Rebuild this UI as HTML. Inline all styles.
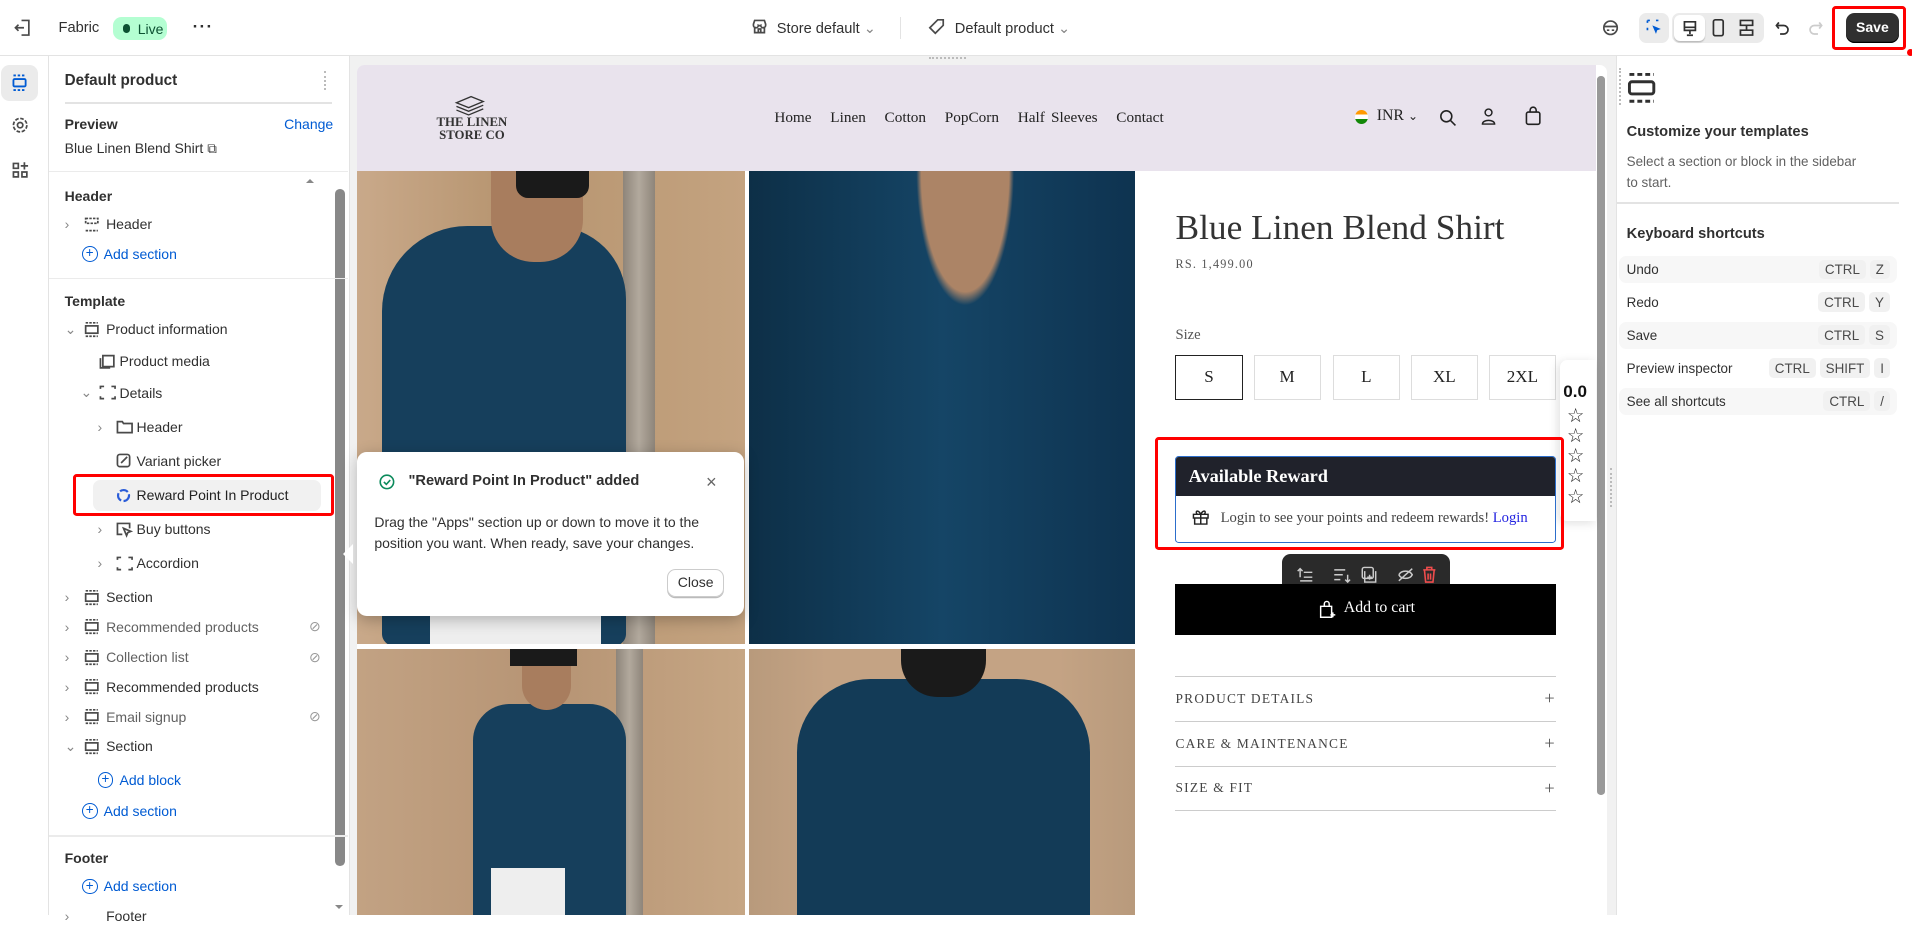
<!DOCTYPE html>
<html><head><meta charset="utf-8"><style>
html{zoom:1.21939}
*{box-sizing:border-box;margin:0;padding:0}
body{width:1568px;height:750px;overflow:hidden;font-family:"Liberation Sans",sans-serif;font-size:12px;color:#303030;background:#fff;position:relative}
.a{position:absolute}
.serif{font-family:"Liberation Serif",serif}
.ico{stroke:#4a4a4a;fill:none;stroke-width:1.4}
.row{position:absolute;left:0;display:flex;align-items:center;height:20px;font-size:11.5px;color:#303030}
.row svg{flex:none}
.blue{color:#005bd3}
.kbd{display:inline-block;background:#f1f1f1;border-radius:4px;padding:2px 5px;margin-left:3px;font-size:11px;color:#4a4a4a}
.sc{position:absolute;left:1328px;width:228px;height:22px;display:flex;align-items:center;justify-content:space-between;padding:0 6px;font-size:11px;border-radius:6px}
.sc.g{background:#f7f7f7}
.sz{position:absolute;top:291px;width:55px;height:37px;border:1px solid #ddd;display:flex;align-items:center;justify-content:center;font-family:"Liberation Serif",serif;font-size:14px;color:#222}
.acc{position:absolute;left:964px;width:312px;height:37px;border-top:1px solid #ccc;font-family:"Liberation Serif",serif;font-size:11px;letter-spacing:1px;color:#444;display:flex;align-items:center;justify-content:space-between}
</style></head><body>
<!-- top bar -->
<div class="a" style="left:0;top:0;width:1568px;height:46px;border-bottom:1px solid #e3e3e3;background:#fff"></div>
<svg class="a" style="left:11px;top:15px" width="16" height="16" viewBox="0 0 16 16"><path class="ico" d="M7 2h6v12H7M2 8h7M4.5 5.5L2 8l2.5 2.5"/></svg>
<div class="a" style="left:48px;top:16px;font-size:12px">Fabric</div>
<div class="a" style="left:93px;top:14px;width:44px;height:19px;background:#b4fed2;border-radius:7px;font-size:11.5px;color:#0c5132;padding:3px 0 0 20px">Live<span class="a" style="left:8px;top:6px;width:6px;height:7px;background:#0c5132;border-radius:3px"></span></div>
<div class="a" style="left:158px;top:14px;font-size:14px;font-weight:bold;letter-spacing:1px">···</div>
<svg class="a" style="left:616px;top:15px" width="14" height="14" viewBox="0 0 14 14"><path class="ico" d="M2 5l1-3h8l1 3v1a2 2 0 01-4 0 2 2 0 01-2 0 2 2 0 01-4 0zM3 7v5h8V7M6 12V9h2v3"/></svg>
<div class="a" style="left:637px;top:16px;font-size:12px">Store default <span style="color:#888">⌄</span></div>
<div class="a" style="left:738px;top:14px;width:1px;height:18px;background:#e3e3e3"></div>
<svg class="a" style="left:761px;top:15px" width="14" height="14" viewBox="0 0 14 14"><path class="ico" d="M8 1.5h4.5V6L6 12.5 1.5 8zM10 4h.1"/></svg>
<div class="a" style="left:783px;top:16px;font-size:12px">Default product <span style="color:#888">⌄</span></div>
<svg class="a" style="left:1314px;top:15px" width="14" height="16" viewBox="0 0 14 16"><circle class="ico" cx="7" cy="8" r="5.5"/><path class="ico" d="M2 7h10M4 10h2M8 10h2"/></svg>
<div class="a" style="left:1344px;top:11px;width:25px;height:24px;background:#ebebeb;border-radius:6px"></div>
<svg class="a" style="left:1349px;top:15px" width="15" height="15" viewBox="0 0 15 15"><path d="M2 2h3M2 2v3M2 8v3M11 2h-2" stroke="#005bd3" stroke-width="1.4" fill="none" stroke-dasharray="2 1.5"/><path d="M6 6l7 3-3 1-1 3z" fill="#005bd3"/></svg>
<div class="a" style="left:1371px;top:11px;width:76px;height:24px;background:#ebebeb;border-radius:6px"></div>
<div class="a" style="left:1373px;top:12px;width:25px;height:22px;background:#fff;border-radius:5px;box-shadow:0 1px 1px rgba(0,0,0,.2)"></div>
<svg class="a" style="left:1379px;top:16px" width="13" height="14" viewBox="0 0 13 14"><path class="ico" style="stroke:#303030" d="M2 1.5h9v7H2zM2 6h9M6.5 8.5v3M4 12.5h5"/></svg>
<svg class="a" style="left:1403px;top:15px" width="12" height="16" viewBox="0 0 12 16"><rect class="ico" style="stroke:#303030" x="2" y="1.5" width="8" height="13" rx="1.5"/></svg>
<svg class="a" style="left:1425px;top:15px" width="14" height="16" viewBox="0 0 14 16"><path class="ico" style="stroke:#303030" d="M2 2h10v4H2zM2 10h10v4H2zM7 6v4"/></svg>
<svg class="a" style="left:1455px;top:16px" width="14" height="14" viewBox="0 0 14 14"><path class="ico" style="stroke:#303030" d="M4 2L2 4.5 4 7M2 4.5h6a3.5 3.5 0 010 7H5"/></svg>
<svg class="a" style="left:1482px;top:16px" width="14" height="14" viewBox="0 0 14 14"><path class="ico" style="stroke:#ccc" d="M10 2l2 2.5L10 7M12 4.5H6a3.5 3.5 0 000 7h3"/></svg>
<div class="a" style="left:1502px;top:5px;width:61px;height:36px;border:3px solid #f00;border-radius:3px"></div>
<div class="a" style="left:1514px;top:11px;width:43px;height:24px;background:#303030;border-radius:7px;color:#fff;font-weight:bold;font-size:11.5px;text-align:center;line-height:24px;box-shadow:inset 0 -1px 0 #000">Save</div>
<div class="a" style="left:1564px;top:40px;width:6px;height:6px;background:#f00;border-radius:3px"></div>

<!-- left rail -->
<div class="a" style="left:0;top:46px;width:40px;height:704px;border-right:1px solid #e3e3e3"></div>
<div class="a" style="left:1px;top:53px;width:30px;height:30px;background:#ebebeb;border-radius:7px"></div>
<svg class="a" style="left:9px;top:60px" width="14" height="16" viewBox="0 0 14 16"><path d="M2 2h10M2 14h10" stroke="#005bd3" stroke-width="1.5" stroke-dasharray="2 1.5"/><rect x="2" y="5" width="10" height="6" rx="1" stroke="#005bd3" stroke-width="1.5" fill="none"/></svg>
<svg class="a" style="left:9px;top:95px" width="15" height="15" viewBox="0 0 15 15"><circle class="ico" cx="7.5" cy="7.5" r="2.2"/><circle class="ico" cx="7.5" cy="7.5" r="5.5" stroke-dasharray="3 1.3"/></svg>
<svg class="a" style="left:9px;top:132px" width="15" height="15" viewBox="0 0 15 15"><path class="ico" d="M2 2h4v4H2zM2 9h4v4H2zM9 9h4v4H9zM11 1v6M8 4h6"/></svg>

<!-- sidebar -->
<div class="a" style="left:53px;top:59px;font-size:12.5px;font-weight:bold;color:#303030">Default product</div>
<div class="a" style="left:266px;top:58px;width:3px;height:16px;border-left:2px dotted #bbb;border-right:0"></div>
<div class="a" style="left:53px;top:84px;width:219px;height:1px;background:#e3e3e3"></div>
<div class="a" style="left:53px;top:95px;font-size:11.5px;font-weight:bold">Preview</div>
<div class="a blue" style="left:233px;top:95px;font-size:11.5px">Change</div>
<div class="a" style="left:53px;top:115px;font-size:11.5px">Blue Linen Blend Shirt <span style="font-size:11px">⧉</span></div>
<div class="a" style="left:40px;top:140px;width:245px;height:1px;background:#ebebeb"></div>
<div class="a" style="left:251px;top:147px;width:0;height:0;border:4px solid transparent;border-bottom-color:#888;border-top:0"></div>
<div class="a" style="left:275px;top:155px;width:8px;height:555px;background:#888;border-radius:4px"></div>
<div class="a" style="left:275px;top:742px;width:0;height:0;border:4px solid transparent;border-top-color:#888"></div>

<div class="a" style="left:53px;top:154px;font-size:11.5px;font-weight:bold">Header</div>
<div class="row" style="top:174px;left:53px"><span style="color:#888;width:14px">›</span><svg width="18" height="14" viewBox="0 0 18 14"><path class="ico" d="M3 2h10v4H3zM3 12h10" stroke-dasharray="2 1"/></svg><span style="margin-left:2px">Header</span></div>
<div class="row blue" style="top:198px;left:67px"><span style="display:inline-block;width:13px;height:13px;border:1.4px solid #005bd3;border-radius:50%;text-align:center;line-height:10px;font-size:11px;margin-right:5px">+</span>Add section</div>
<div class="a" style="left:40px;top:228px;width:245px;height:1px;background:#ebebeb"></div>
<div class="a" style="left:53px;top:240px;font-size:11.5px;font-weight:bold">Template</div>
<div class="row" style="top:260px;left:53px"><span style="color:#888;width:14px">⌄</span><svg width="18" height="14" viewBox="0 0 18 14"><path class="ico" d="M3 1.5h10M3 12.5h10" stroke-dasharray="2 1"/><rect class="ico" x="3" y="4" width="10" height="6"/></svg><span style="margin-left:2px">Product information</span></div>
<div class="row" style="top:286px;left:80px"><svg width="16" height="14" viewBox="0 0 16 14"><path class="ico" d="M4 3h9v9H4zM2 5v8h8"/></svg><span style="margin-left:2px">Product media</span></div>
<div class="row" style="top:312px;left:66px"><span style="color:#888;width:14px">⌄</span><svg width="16" height="14" viewBox="0 0 16 14"><path class="ico" d="M2 4V2h3M11 2h3v2M14 10v2h-3M5 12H2v-2"/></svg><span style="margin-left:2px">Details</span></div>
<div class="row" style="top:340px;left:80px"><span style="color:#888;width:14px">›</span><svg width="16" height="14" viewBox="0 0 16 14"><path class="ico" d="M2 3h4l1 1.5h7V12H2z"/></svg><span style="margin-left:2px">Header</span></div>
<div class="row" style="top:368px;left:94px"><svg width="16" height="14" viewBox="0 0 16 14"><rect class="ico" x="2" y="2" width="10" height="10" rx="2"/><path class="ico" d="M5 9l5-5"/></svg><span style="margin-left:2px">Variant picker</span></div>
<div class="a" style="left:76px;top:394px;width:187px;height:25px;background:#f1f1f1;border-radius:6px"></div>
<div class="a" style="left:60px;top:389px;width:214px;height:34px;border:3px solid #f00;border-radius:3px"></div>
<div class="row" style="top:396px;left:94px;font-weight:500;color:#222"><svg width="16" height="14" viewBox="0 0 16 14"><circle cx="7" cy="7" r="4.5" stroke="#2a5cd8" stroke-width="1.8" fill="none" stroke-dasharray="7 2"/></svg><span style="margin-left:2px">Reward Point In Product</span></div>
<div class="row" style="top:424px;left:80px"><span style="color:#888;width:14px">›</span><svg width="16" height="14" viewBox="0 0 16 14"><path class="ico" d="M6 11H2V2h10v4M7 6l6 2.5-2.5 1L9.5 12z"/></svg><span style="margin-left:2px">Buy buttons</span></div>
<div class="row" style="top:452px;left:80px"><span style="color:#888;width:14px">›</span><svg width="16" height="14" viewBox="0 0 16 14"><path class="ico" d="M2 4V2h3M11 2h3v2M14 10v2h-3M5 12H2v-2"/></svg><span style="margin-left:2px">Accordion</span></div>
<div class="row" style="top:480px;left:53px"><span style="color:#888;width:14px">›</span><svg width="18" height="14" viewBox="0 0 18 14"><path class="ico" d="M3 1.5h10M3 12.5h10" stroke-dasharray="2 1"/><rect class="ico" x="3" y="4" width="10" height="6"/></svg><span style="margin-left:2px">Section</span></div>
<div class="row" style="top:504px;left:53px;width:210px;color:#616161"><span style="color:#888;width:14px">›</span><svg width="18" height="14" viewBox="0 0 18 14"><path class="ico" d="M3 1.5h10M3 12.5h10" stroke-dasharray="2 1"/><rect class="ico" x="3" y="4" width="10" height="6"/></svg><span style="margin-left:2px;flex:1">Recommended products</span><span style="color:#999">⊘</span></div>
<div class="row" style="top:529px;left:53px;width:210px;color:#616161"><span style="color:#888;width:14px">›</span><svg width="18" height="14" viewBox="0 0 18 14"><path class="ico" d="M3 1.5h10M3 12.5h10" stroke-dasharray="2 1"/><rect class="ico" x="3" y="4" width="10" height="6"/></svg><span style="margin-left:2px;flex:1">Collection list</span><span style="color:#999">⊘</span></div>
<div class="row" style="top:553px;left:53px"><span style="color:#888;width:14px">›</span><svg width="18" height="14" viewBox="0 0 18 14"><path class="ico" d="M3 1.5h10M3 12.5h10" stroke-dasharray="2 1"/><rect class="ico" x="3" y="4" width="10" height="6"/></svg><span style="margin-left:2px">Recommended products</span></div>
<div class="row" style="top:578px;left:53px;width:210px;color:#616161"><span style="color:#888;width:14px">›</span><svg width="18" height="14" viewBox="0 0 18 14"><path class="ico" d="M3 1.5h10M3 12.5h10" stroke-dasharray="2 1"/><rect class="ico" x="3" y="4" width="10" height="6"/></svg><span style="margin-left:2px;flex:1">Email signup</span><span style="color:#999">⊘</span></div>
<div class="row" style="top:602px;left:53px"><span style="color:#888;width:14px">⌄</span><svg width="18" height="14" viewBox="0 0 18 14"><path class="ico" d="M3 1.5h10M3 12.5h10" stroke-dasharray="2 1"/><rect class="ico" x="3" y="4" width="10" height="6"/></svg><span style="margin-left:2px">Section</span></div>
<div class="row blue" style="top:630px;left:80px"><span style="display:inline-block;width:13px;height:13px;border:1.4px solid #005bd3;border-radius:50%;text-align:center;line-height:10px;font-size:11px;margin-right:5px">+</span>Add block</div>
<div class="row blue" style="top:655px;left:67px"><span style="display:inline-block;width:13px;height:13px;border:1.4px solid #005bd3;border-radius:50%;text-align:center;line-height:10px;font-size:11px;margin-right:5px">+</span>Add section</div>
<div class="a" style="left:40px;top:685px;width:245px;height:1px;background:#ebebeb"></div>
<div class="a" style="left:53px;top:697px;font-size:11.5px;font-weight:bold">Footer</div>
<div class="row blue" style="top:717px;left:67px"><span style="display:inline-block;width:13px;height:13px;border:1.4px solid #005bd3;border-radius:50%;text-align:center;line-height:10px;font-size:11px;margin-right:5px">+</span>Add section</div>
<div class="row" style="top:741px;left:53px"><span style="color:#888;width:14px">›</span><span style="margin-left:20px">Footer</span></div>

<!-- preview area -->
<div class="a" style="left:286px;top:46px;width:1039px;height:704px;background:#f1f1f1;border-left:1px solid #e3e3e3"></div>
<div class="a" style="left:762px;top:47px;width:30px;height:4px;border-top:2px dotted #bbb"></div>
<div class="a" style="left:293px;top:53px;width:1025px;height:697px;background:#fff;border-radius:6px 6px 0 0;overflow:hidden">
  <div class="a" style="left:0;top:0;width:1016px;height:87px;background:#e9e3ed"></div>
</div>
<div class="a" style="left:1310px;top:62px;width:6px;height:590px;background:#999;border-radius:3px"></div>
<!-- logo -->
<svg class="a" style="left:372px;top:76px" width="26" height="20" viewBox="0 0 26 20"><path d="M2 8l12-5 10 4-12 5zM2 11l10 4 12-5M2 14l10 4 12-5" stroke="#333" fill="none" stroke-width="1.1"/></svg>
<div class="a serif" style="left:350px;top:95px;width:74px;text-align:center;font-size:10.5px;line-height:11px;font-weight:bold;color:#333">THE LINEN<br>STORE CO</div>
<div class="a serif" style="left:635px;top:89px;font-size:12.5px;color:#222;word-spacing:2px">Home &nbsp;&nbsp;Linen &nbsp;&nbsp;Cotton &nbsp;&nbsp;PopCorn &nbsp;&nbsp;Half Sleeves &nbsp;&nbsp;Contact</div>
<div class="a" style="left:1111px;top:90px;width:11px;height:12px;border-radius:50%;background:linear-gradient(#f90 0 33%,#fff 33% 66%,#138808 66%)"></div>
<div class="a serif" style="left:1129px;top:88px;font-size:13px;color:#222">INR <span style="font-size:10px">⌄</span></div>
<svg class="a" style="left:1180px;top:89px" width="15" height="15" viewBox="0 0 15 15"><circle cx="6" cy="6" r="4.5" stroke="#222" fill="none" stroke-width="1.3"/><path d="M9.5 9.5l4 4" stroke="#222" stroke-width="1.3"/></svg>
<svg class="a" style="left:1214px;top:88px" width="14" height="16" viewBox="0 0 14 16"><circle cx="7" cy="4.5" r="2.8" stroke="#222" fill="none" stroke-width="1.2"/><path d="M2 14c0-4 10-4 10 0z" stroke="#222" fill="none" stroke-width="1.2"/></svg>
<svg class="a" style="left:1250px;top:87px" width="15" height="17" viewBox="0 0 15 17"><rect x="2" y="5" width="11" height="10" rx="1.5" stroke="#222" fill="none" stroke-width="1.3"/><path d="M5 5V3.5a2.5 2.5 0 015 0V5" stroke="#222" fill="none" stroke-width="1.3"/></svg>

<!-- photos -->
<div class="a" style="left:293px;top:140px;width:318px;height:388px;background:linear-gradient(90deg,#c9a98a,#b6946f 40%,#c4a380);overflow:hidden">
  <div class="a" style="left:218px;top:0;width:26px;height:388px;background:linear-gradient(90deg,#8e857a,#b2a99d,#8e857a)"></div>
  <div class="a" style="left:20px;top:45px;width:200px;height:345px;background:#163f5c;border-radius:70px 60px 10px 10px"></div>
  <div class="a" style="left:110px;top:0;width:75px;height:75px;background:#a87d5e;border-radius:0 0 35px 35px"></div>
  <div class="a" style="left:130px;top:0;width:60px;height:22px;background:#1a1a1a;border-radius:0 0 10px 10px"></div>
  <div class="a" style="left:60px;top:360px;width:140px;height:30px;background:#eee"></div>
</div>
<div class="a" style="left:614px;top:140px;width:317px;height:388px;background:radial-gradient(ellipse 40px 110px at 56% 0%,#ac8466 0 90%,transparent 100%),linear-gradient(90deg,#0d2f47,#154566 50%,#0e3350)"></div>
<div class="a" style="left:293px;top:532px;width:318px;height:218px;background:linear-gradient(90deg,#c2a283,#b69474 50%,#c6a684);overflow:hidden">
  <div class="a" style="left:212px;top:0;width:22px;height:218px;background:linear-gradient(90deg,#8e857a,#b2a99d,#8e857a)"></div>
  <div class="a" style="left:95px;top:45px;width:125px;height:175px;background:#163f5c;border-radius:30px 30px 0 0"></div>
  <div class="a" style="left:135px;top:0;width:40px;height:50px;background:#a87d5e;border-radius:0 0 20px 20px"></div>
  <div class="a" style="left:125px;top:0;width:55px;height:14px;background:#1a1a1a"></div>
  <div class="a" style="left:110px;top:180px;width:60px;height:40px;background:#eee"></div>
</div>
<div class="a" style="left:614px;top:532px;width:317px;height:218px;background:linear-gradient(90deg,#b89a7c,#c4a384 20%,#c4a384 80%,#b89a7c);overflow:hidden">
  <div class="a" style="left:40px;top:25px;width:240px;height:200px;background:#133b57;border-radius:60px 60px 0 0"></div>
  <div class="a" style="left:125px;top:0;width:70px;height:40px;background:#1a1a1a;border-radius:0 0 30px 30px"></div>
</div>

<!-- toast -->
<div class="a" style="left:293px;top:371px;width:317px;height:134px;background:#fff;border-radius:8px;box-shadow:0 3px 12px rgba(0,0,0,.25)"></div>
<div class="a" style="left:281px;top:446px;width:0;height:0;border:9px solid transparent;border-right-color:#fff;border-left:0"></div>
<svg class="a" style="left:311px;top:389px" width="13" height="13" viewBox="0 0 13 13"><circle cx="6.5" cy="6.5" r="5.5" stroke="#0b8a5b" stroke-width="1.3" fill="none"/><path d="M4 6.5l2 2 3.2-3.5" stroke="#0b8a5b" stroke-width="1.3" fill="none"/></svg>
<div class="a" style="left:335px;top:388px;font-size:12px;font-weight:bold;color:#303030">"Reward Point In Product" added</div>
<div class="a" style="left:579px;top:386px;font-size:15px;color:#666">×</div>
<div class="a" style="left:307px;top:420px;width:290px;font-size:11.5px;line-height:17px;color:#303030">Drag the "Apps" section up or down to move it to the position you want. When ready, save your changes.</div>
<div class="a" style="left:547px;top:467px;width:47px;height:23px;border:1px solid #ccc;border-radius:7px;font-size:11.5px;text-align:center;line-height:21px;box-shadow:0 1px 0 #bbb">Close</div>

<!-- product info -->
<div class="a serif" style="left:964px;top:169px;font-size:29px;color:#333">Blue Linen Blend Shirt</div>
<div class="a serif" style="left:964px;top:211px;font-size:10px;color:#555;letter-spacing:1px">RS. 1,499.00</div>
<div class="a serif" style="left:964px;top:268px;font-size:12px;color:#555">Size</div>
<div class="sz" style="left:964px;border:1px solid #222">S</div>
<div class="sz" style="left:1028px">M</div>
<div class="sz" style="left:1093px">L</div>
<div class="sz" style="left:1157px">XL</div>
<div class="sz" style="left:1221px">2XL</div>
<!-- ratings widget -->
<div class="a" style="left:1279px;top:295px;width:30px;height:132px;background:#fff;border-radius:6px 0 0 6px;box-shadow:-2px 2px 8px rgba(0,0,0,.12)"></div>
<div class="a" style="left:1282px;top:313px;font-size:14px;font-weight:bold;color:#111">0.0</div>
<div class="a" style="left:1285px;top:333px;font-size:16px;line-height:16.5px;color:#222">☆<br>☆<br>☆<br>☆<br>☆</div>
<div class="a" style="left:1320px;top:384px;width:4px;height:32px;border-left:2px dotted #bbb"></div>
<!-- reward -->
<div class="a" style="left:947px;top:358px;width:336px;height:93px;border:3px solid #f00;border-radius:3px"></div>
<div class="a" style="left:964px;top:374px;width:312px;height:71px;border:1.5px solid #2c6ecb;border-radius:3px;background:#fff;overflow:hidden">
  <div style="height:32px;background:#20222b;color:#fff;font-family:'Liberation Serif',serif;font-weight:bold;font-size:15px;padding:7px 0 0 10px">Available Reward</div>
</div>
<svg class="a" style="left:977px;top:416px" width="16" height="16" viewBox="0 0 16 16"><path d="M2 6h12v3H2zM3 9h10v5H3zM8 6v8M8 6C6 2 3 3 5 6M8 6c2-4 5-3 3 0" stroke="#222" fill="none" stroke-width="1.2"/></svg>
<div class="a serif" style="left:1001px;top:418px;font-size:12px;color:#444">Login to see your points and redeem rewards! <span style="color:#2323e0">Login</span></div>
<!-- floating toolbar -->
<div class="a" style="left:1051px;top:454px;width:138px;height:33px;background:#2a2a2a;border-radius:7px"></div>
<svg class="a" style="left:1061px;top:463px" width="120" height="16" viewBox="0 0 120 16"><g stroke="#ccc" fill="none" stroke-width="1.2"><path d="M3 5l2-2 2 2M5 3v7M8 6h7M8 10h7M5 13h10"/><path d="M33 4h9M33 8h7M33 12h5M44 8v6M42 12l2 2 2-2"/><rect x="56" y="2" width="9" height="9" rx="1.5"/><path d="M58 5v9h9V5M62 8v4M60 10h4" /><path d="M86 8c2-4 9-4 11 0-2 4-9 4-11 0M86 13L97 3"/></g><g stroke="#ef4d4d" fill="none" stroke-width="1.3"><path d="M106 4h10M109 4V2h4v2M107 4l1 10h6l1-10M110 7v5M112 7v5"/></g></svg>
<div class="a" style="left:964px;top:479px;width:312px;height:42px;background:#000"></div>
<svg class="a" style="left:1080px;top:491px" width="16" height="17" viewBox="0 0 16 17"><path d="M3 6h9v9H3zM6 6V4a2 2 0 014 0v2M11 13h4M13 11v4" stroke="#fff" fill="none" stroke-width="1.2"/></svg>
<div class="a serif" style="left:1102px;top:491px;font-size:13px;color:#fff">Add to cart</div>
<div class="acc" style="top:554px">PRODUCT DETAILS<span style="font-size:15px;color:#555">+</span></div>
<div class="acc" style="top:591px">CARE &amp; MAINTENANCE<span style="font-size:15px;color:#555">+</span></div>
<div class="acc" style="top:628px;border-bottom:1px solid #ccc">SIZE &amp; FIT<span style="font-size:15px;color:#555">+</span></div>

<!-- right panel -->
<div class="a" style="left:1325px;top:46px;width:1px;height:704px;background:#e3e3e3"></div>
<div class="a" style="left:1328px;top:56px;width:3px;height:30px;border-left:2px dotted #bbb"></div>
<svg class="a" style="left:1334px;top:59px" width="24" height="26" viewBox="0 0 24 26"><path d="M2 2h20M2 24h20" stroke="#303030" stroke-width="2.4" stroke-dasharray="4 2.5"/><rect x="2" y="8" width="20" height="10" rx="2" stroke="#303030" stroke-width="2.4" fill="none"/></svg>
<div class="a" style="left:1334px;top:102px;font-size:12px;font-weight:bold">Customize your templates</div>
<div class="a" style="left:1334px;top:125px;width:200px;font-size:11px;line-height:17px;color:#616161">Select a section or block in the sidebar to start.</div>
<div class="a" style="left:1325px;top:166px;width:232px;height:1px;background:#e3e3e3"></div>
<div class="a" style="left:1334px;top:185px;font-size:12px;font-weight:bold">Keyboard shortcuts</div>
<div class="sc g" style="top:210px"><span>Undo</span><span><span class="kbd">CTRL</span><span class="kbd">Z</span></span></div>
<div class="sc" style="top:237px"><span>Redo</span><span><span class="kbd">CTRL</span><span class="kbd">Y</span></span></div>
<div class="sc g" style="top:264px"><span>Save</span><span><span class="kbd">CTRL</span><span class="kbd">S</span></span></div>
<div class="sc" style="top:291px"><span>Preview inspector</span><span><span class="kbd">CTRL</span><span class="kbd">SHIFT</span><span class="kbd">I</span></span></div>
<div class="sc g" style="top:318px"><span>See all shortcuts</span><span><span class="kbd">CTRL</span><span class="kbd">/</span></span></div>
</body></html>
